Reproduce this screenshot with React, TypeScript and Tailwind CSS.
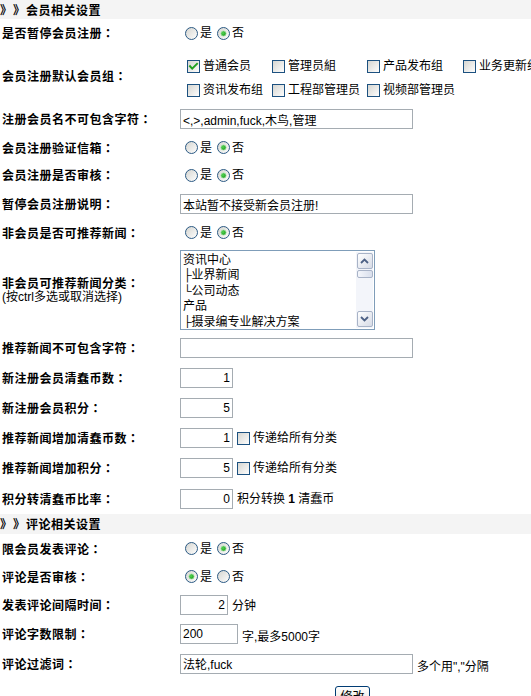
import React from "react";

const Radio = ({ checked }: { checked: boolean }) => (
  <svg width="13" height="13" viewBox="0 0 13 13" className="shrink-0">
    <defs>
      <linearGradient id="rg" x1="0" y1="0" x2="1" y2="1">
        <stop offset="0" stopColor="#d4d4cf" />
        <stop offset="1" stopColor="#ffffff" />
      </linearGradient>
      <radialGradient id="rd" cx="0.4" cy="0.4" r="0.6">
        <stop offset="0" stopColor="#55d455" />
        <stop offset="1" stopColor="#1e9e1e" />
      </radialGradient>
    </defs>
    <circle cx="6.5" cy="6.5" r="6" fill="url(#rg)" stroke="#2c5a84" strokeWidth="1" />
    {checked && <circle cx="6.5" cy="6.5" r="2.6" fill="url(#rd)" stroke="#a6e2a6" strokeWidth="0.8" />}
  </svg>
);

const Check = ({ checked = false }: { checked?: boolean }) => (
  <svg width="13" height="13" viewBox="0 0 13 13" className="shrink-0">
    <defs>
      <linearGradient id="cg" x1="0" y1="0" x2="1" y2="1">
        <stop offset="0" stopColor="#d4d4cf" />
        <stop offset="1" stopColor="#ffffff" />
      </linearGradient>
    </defs>
    <rect x="0.5" y="0.5" width="12" height="12" fill="url(#cg)" stroke="#1c5180" />
    {checked && (
      <path d="M3 6.2 L5.2 8.6 L10 3.8" stroke="#21a121" strokeWidth="2" fill="none" strokeLinecap="square" />
    )}
  </svg>
);

const YesNo = ({ yes }: { yes: boolean }) => (
  <div className="flex items-center pl-[5px]">
    <Radio checked={yes} />
    <span className="ml-[2px]">是</span>
    <span className="ml-[5px] flex items-center">
      <Radio checked={!yes} />
    </span>
    <span className="ml-[2px]">否</span>
  </div>
);

const Row = ({
  label,
  h,
  children,
  sub,
}: {
  label: string;
  h: string;
  children?: React.ReactNode;
  sub?: string;
}) => (
  <div className={`flex items-center ${h}`}>
    <div className="w-[180px] shrink-0 pl-[2px]">
      <div className="font-bold tracking-[0.5px] leading-[14px] whitespace-nowrap [font-family:'Noto_Sans_CJK_SC',sans-serif]">
        {label}
        <span className="[font-family:'Noto_Sans_CJK_TC',sans-serif]">：</span>
      </div>
      {sub && <div className="leading-[14px] whitespace-nowrap">{sub}</div>}
    </div>
    <div className="flex items-center whitespace-nowrap">{children}</div>
  </div>
);

const Header = ({ text, h }: { text: string; h: string }) => (
  <div
    className={`flex items-center bg-[#f4f4f4] font-bold tracking-[0.5px] [font-family:'Noto_Sans_CJK_SC',sans-serif] ${h}`}
  >
    <span className="w-[13px]">》</span>
    <span className="w-[13px]">》</span>
    <span>{text}</span>
  </div>
);

const inputBase =
  "h-[20px] border border-[#a5acb2] bg-white px-[2px] text-[12px] text-black outline-none [font-family:'Liberation_Sans','Noto_Sans_CJK_SC',sans-serif]";

const TextIn = ({ v = "", w = "w-[233px]" }: { v?: string; w?: string }) => (
  <input readOnly defaultValue={v} className={`${inputBase} ${w}`} />
);

const NumIn = ({ v, w = "w-[53px]" }: { v: string; w?: string }) => (
  <input readOnly defaultValue={v} className={`${inputBase} ${w} text-right`} />
);

const Arrow = ({ up }: { up: boolean }) => (
  <svg width="9" height="6" viewBox="0 0 9 6">
    <path d={up ? "M1 5 L4.5 1.5 L8 5" : "M1 1 L4.5 4.5 L8 1"} stroke="#4d6185" strokeWidth="1.8" fill="none" />
  </svg>
);

const SbBtn = ({ up }: { up: boolean }) => (
  <div className="flex h-[16px] w-[16px] items-center justify-center rounded-[2px] border border-[#a8b3c7] bg-gradient-to-br from-[#ffffff] to-[#d6dbe6]">
    <Arrow up={up} />
  </div>
);

const groups1 = ["普通会员", "管理员組", "产品发布组", "业务更新组"];
const groups2 = ["资讯发布组", "工程部管理员", "视频部管理员"];

export default function App() {
  return (
    <div className="h-[696px] w-[531px] overflow-hidden bg-white text-[12px] text-black [font-family:'Liberation_Sans','Noto_Sans_CJK_SC',sans-serif]">
      <Header text="会员相关设置" h="h-[19px]" />
      <Row label="是否暂停会员注册" h="h-[28px]">
        <YesNo yes={false} />
      </Row>
      <Row label="会员注册默认会员组" h="h-[57px]">
        <div className="grid grid-cols-[85px_95px_96px_96px] gap-y-[10px] pl-[7px] pt-[5px]">
          {groups1.map((g, i) => (
            <div key={g} className="flex h-[14px] items-center whitespace-nowrap">
              <Check checked={i === 0} />
              <span className="ml-[3px]">{g}</span>
            </div>
          ))}
          {groups2.map((g) => (
            <div key={g} className="flex h-[14px] items-center whitespace-nowrap">
              <Check />
              <span className="ml-[3px]">{g}</span>
            </div>
          ))}
        </div>
      </Row>
      <Row label="注册会员名不可包含字符" h="h-[30px]">
        <TextIn v="<,>,admin,fuck,木鸟,管理" />
      </Row>
      <Row label="会员注册验证信箱" h="h-[27px]">
        <YesNo yes={false} />
      </Row>
      <Row label="会员注册是否审核" h="h-[28px]">
        <YesNo yes={false} />
      </Row>
      <Row label="暂停会员注册说明" h="h-[30px]">
        <TextIn v="本站暂不接受新会员注册!" />
      </Row>
      <Row label="非会员是否可推荐新闻" h="h-[27px]">
        <YesNo yes={false} />
      </Row>
      <Row label="非会员可推荐新闻分类" sub="(按ctrl多选或取消选择)" h="h-[87px]">
        <div className="flex h-[80px] w-[195px] border border-[#7f9db9] bg-white p-[1px]">
          <div className="flex-1 overflow-hidden pl-[1px] pt-[1px] leading-[15.5px]">
            <div>资讯中心</div>
            <div>├业界新闻</div>
            <div>└公司动态</div>
            <div>产品</div>
            <div>├摄录编专业解决方案</div>
          </div>
          <div className="flex w-[17px] flex-col items-center bg-[#f3f5fa] pt-[1px]">
            <SbBtn up />
            <div className="mt-[1px] h-[8px] w-[16px] rounded-[2px] border border-[#a8b3c7] bg-gradient-to-r from-[#f4f6fb] to-[#d9dfec]" />
            <div className="flex-1" />
            <SbBtn up={false} />
            <div className="h-[1px]" />
          </div>
        </div>
      </Row>
      <Row label="推荐新闻不可包含字符" h="h-[30px]">
        <TextIn />
      </Row>
      <Row label="新注册会员清蠢币数" h="h-[30px]">
        <NumIn v="1" />
      </Row>
      <Row label="新注册会员积分" h="h-[30px]">
        <NumIn v="5" />
      </Row>
      <Row label="推荐新闻增加清蠢币数" h="h-[30px]">
        <NumIn v="1" />
        <span className="ml-[4px] flex items-center">
          <Check />
        </span>
        <span className="ml-[3px]">传递给所有分类</span>
      </Row>
      <Row label="推荐新闻增加积分" h="h-[30px]">
        <NumIn v="5" />
        <span className="ml-[4px] flex items-center">
          <Check />
        </span>
        <span className="ml-[3px]">传递给所有分类</span>
      </Row>
      <Row label="积分转清蠢币比率" h="h-[31px]">
        <NumIn v="0" />
        <span className="ml-[4px]">
          积分转换 <b>1</b> 清蠢币
        </span>
      </Row>
      <Header text="评论相关设置" h="h-[20px]" />
      <Row label="限会员发表评论" h="h-[29px]">
        <YesNo yes={false} />
      </Row>
      <Row label="评论是否审核" h="h-[27px]">
        <YesNo yes={true} />
      </Row>
      <Row label="发表评论间隔时间" h="h-[29px]">
        <NumIn v="2" w="w-[48px]" />
        <span className="ml-[4px] mt-[3px]">分钟</span>
      </Row>
      <Row label="评论字数限制" h="h-[29px]">
        <TextIn v="200" w="w-[58px]" />
        <span className="ml-[4px] mt-[7px]">字,最多5000字</span>
      </Row>
      <Row label="评论过滤词" h="h-[31px]">
        <TextIn v="法轮,fuck" />
        <span className="ml-[4px] mt-[7px]">多个用&quot;,&quot;分隔</span>
      </Row>
      <div className="flex pt-[7px]">
        <div className="w-[180px] shrink-0" />
        <div className="flex w-[345px] justify-center">
          <button className="h-[22px] rounded-[3px] border border-[#003c74] bg-gradient-to-b from-[#ffffff] to-[#e3e1d6] px-[4px] text-[12px] leading-[18px] text-black">
            修改
          </button>
        </div>
      </div>
    </div>
  );
}
